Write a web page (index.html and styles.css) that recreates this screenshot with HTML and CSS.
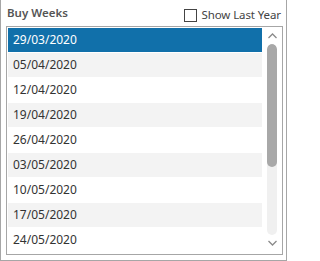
FILE: index.html
```html
<!DOCTYPE html>
<html>
<head>
<meta charset="utf-8">
<link rel="stylesheet" href="styles.css">
</head>
<body>
<div class="frame">
  <div class="header">
    <span class="title">Buy Weeks</span>
    <label class="toggle"><span class="box"></span><span class="toggle-text">Show Last Year</span></label>
  </div>
  <div class="list">
    <div class="rows">
      <div class="row selected">29/03/2020</div>
      <div class="row alt">05/04/2020</div>
      <div class="row">12/04/2020</div>
      <div class="row alt">19/04/2020</div>
      <div class="row">26/04/2020</div>
      <div class="row alt">03/05/2020</div>
      <div class="row">10/05/2020</div>
      <div class="row alt">17/05/2020</div>
      <div class="row">24/05/2020</div>
    </div>
    <div class="scrollbar">
      <svg class="arrow" width="9" height="6" viewBox="0 0 9 6"><path d="M0.5 5 L4.5 1 L8.5 5" fill="none" stroke="#8a8a8a" stroke-width="1.3"/></svg>
      <div class="track"><div class="thumb"></div></div>
      <svg class="arrow" width="9" height="6" viewBox="0 0 9 6"><path d="M0.5 1 L4.5 5 L8.5 1" fill="none" stroke="#8a8a8a" stroke-width="1.3"/></svg>
    </div>
  </div>
</div>
</body>
</html>
```

FILE: styles.css
```css
html, body {
  margin: 0;
  padding: 0;
  background: #fff;
}
body {
  font-family: "Noto Sans", "Open Sans", sans-serif;
  font-size: 12px;
  color: #333;
}
.frame {
  box-sizing: border-box;
  width: 287px;
  height: 261px;
  border: 1px solid #a6a6a6;
  border-top: none;
  padding: 0 3px 5px 5px;
  display: flex;
  flex-direction: column;
}
.header {
  height: 26px;
  display: flex;
  align-items: flex-start;
  justify-content: space-between;
}
.title {
  font-weight: 600;
  font-size: 11.5px;
  color: #555;
  padding: 5px 0 0 1px;
  line-height: 16px;
}
.toggle {
  display: flex;
  align-items: center;
  padding-top: 7px;
  margin-right: 2px;
  gap: 4px;
  line-height: 16px;
  font-size: 11.5px;
}
.box {
  width: 11px;
  height: 11px;
  border: 1px solid #444;
  background: #fff;
}
.toggle-text {
  color: #444;
  letter-spacing: -0.1px;
}
.list {
  flex: 1;
  min-height: 0;
  border: 1px solid #a6a6a6;
  display: flex;
  padding: 1px 0 0 1px;
  overflow: hidden;
}
.rows {
  width: 254px;
  display: flex;
  flex-direction: column;
  gap: 1px;
}
.row {
  height: 24px;
  flex: none;
  line-height: 24px;
  padding-left: 5px;
  color: #333;
}
.row.alt {
  background: #f3f3f3;
}
.row.selected {
  background: #1170aa;
  color: #fff;
}
.scrollbar {
  flex: 1;
  display: flex;
  flex-direction: column;
  align-items: center;
  padding-top: 5px;
}
.arrow {
  display: block;
  flex: none;
}
.track {
  margin: 5px 0 5px;
  width: 10px;
  height: 191px;
  background: #f0f0f0;
  border-radius: 5px;
  overflow: hidden;
}
.thumb {
  height: 123px;
  background: #a8a8a8;
  border-radius: 5px;
}
```
